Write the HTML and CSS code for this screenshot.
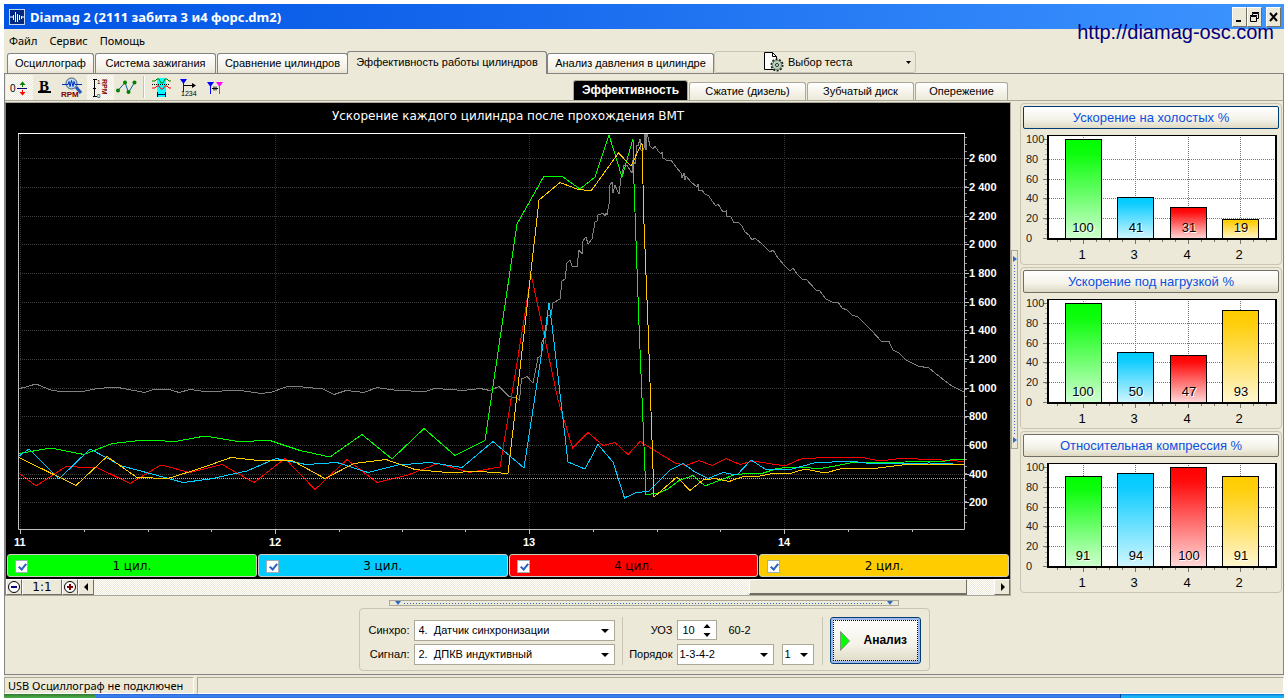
FILE: index.html
```html
<!DOCTYPE html>
<html lang="ru">
<head>
<meta charset="utf-8">
<title>Diamag 2</title>
<link rel="stylesheet" href="styles.css">
</head>
<body>
<div class="window">
  <header class="titlebar">
    <svg class="app-icon" viewBox="0 0 16 16" aria-hidden="true"><rect width="16" height="16" fill="#c8d8f0"/><rect x="1" y="1" width="14" height="14" fill="#002a80"/><path d="M1 8h3M4.500 6v5M6.500 3v10M8.500 5v8M10.500 6v5M12.500 7v3M12 8h3" fill="none" stroke="#fff"/></svg>
    <h1 class="title">Diamag 2 (2111 забита 3 и4 форс.dm2)</h1>
    <div class="win-buttons">
      <button class="win-btn" aria-label="Свернуть"><svg viewBox="0 0 11 16"><path d="M2 11h5v2H2z"/></svg></button>
      <button class="win-btn" aria-label="Восстановить"><svg viewBox="0 0 11 16"><path d="M3.500 7V4.500h6v5H8M3 3.500h7M1.500 7.500h6v5h-6zM1 6.500h7" fill="none" stroke="#000"/></svg></button>
      <button class="win-btn close" aria-label="Закрыть"><svg viewBox="0 0 11 16"><path d="M2 4l7 8M9 4l-7 8" fill="none" stroke="#000" stroke-width="2"/></svg></button>
    </div>
    <a class="site-link" href="#">http://diamag-osc.com</a>
  </header>

  <nav class="menu">
    <button class="menu-item">Файл</button>
    <button class="menu-item">Сервис</button>
    <button class="menu-item">Помощь</button>
  </nav>

  <div class="tabs">
    <button class="tab w-osc">Осциллограф</button>
    <button class="tab w-ign">Система зажигания</button>
    <button class="tab w-cmp">Сравнение цилиндров</button>
    <button class="tab active w-eff">Эффективность работы цилиндров</button>
    <button class="tab w-prs">Анализ давления в цилиндре</button>
    <button class="test-select">
      <svg class="doc-icon" viewBox="0 0 22 22" aria-hidden="true"><path d="M1.500 1.500h8l4 4v13h-12z" fill="#fff" stroke="#000"/><path d="M9.500 1.500v4h4" fill="none" stroke="#000"/><circle cx="14" cy="14" r="5.500" fill="#b9d3bd" stroke="#222" stroke-width="2" stroke-dasharray="2 1.400"/><circle cx="14" cy="14" r="4.500" fill="#b9d3bd" stroke="#6d8a72"/><circle cx="14" cy="14" r="1.500" fill="#fff" stroke="#222"/></svg>
      <span>Выбор теста</span>
      <svg class="caret" viewBox="0 0 5 3" aria-hidden="true"><path d="M0 0h5L2.500 3z"/></svg>
    </button>
  </div>

  <main class="page">
    <div class="toolbar">
      <button class="tool pressed" aria-label="Смещение нуля"><svg viewBox="6 75 27 25"><text x="10" y="92" font-size="10">0</text><path d="M17 88.500h10" stroke="#000080"/><path d="M22.500 87v-3" stroke="#008000"/><path d="M19.500 85l3-3.500 3 3.500z" fill="#008000"/><path d="M22.500 90v2" stroke="#f00"/><path d="M19.500 92l3 3.500 3-3.500z" fill="#f00"/></svg></button>
      <button class="tool" aria-label="Толщина линий"><svg viewBox="33 75 27 25"><text class="serif" x="39" y="91" font-size="15">B</text><path d="M38 92h13" stroke="#000" stroke-width="2"/></svg></button>
      <button class="tool" aria-label="Поиск оборотов"><svg viewBox="60 75 27 25"><path d="M76 87l5 6" stroke="#2454b8" stroke-width="3"/><circle cx="71.500" cy="83.500" r="5.500" fill="#b8dcf8" stroke="#456"/><path d="M62 84.500h6l1-3 1 5 1.500-6 1.500 6 1-5 1 3h7" fill="none" stroke="#0030c0"/><text x="61" y="97" font-size="8" class="rpm">RPM</text></svg></button>
      <button class="tool pressed" aria-label="Шкала оборотов"><svg viewBox="87 75 27 25"><path d="M93 79.500h4M93 96.500h4M94.500 79v18M93 88.500h3" stroke="#000"/><text x="97" y="84" font-size="6">1</text><text x="97" y="98" font-size="6">0</text><text transform="translate(102 79) rotate(90)" font-size="7" class="rpm">RPM</text></svg></button>
      <button class="tool" aria-label="Точки графика"><svg viewBox="114 75 27 25"><path d="M118 90.500l7-8 3.500 10 6-10" fill="none" stroke="#0060a0"/><g fill="#008000"><circle cx="118" cy="90.500" r="2"/><circle cx="125" cy="82.500" r="2"/><circle cx="128.500" cy="92" r="2"/><circle cx="134.500" cy="82.500" r="2"/></g></svg></button>
      <span class="tool-sep"></span>
      <button class="tool" aria-label="Окно сравнения"><svg viewBox="148 75 27 25"><path d="M157 78h9v19h-9z" fill="#0ff"/><path d="M152 81h3l2-2h2l2 4h2l2-4h2l2 2h2" fill="none" stroke="#008000"/><path d="M152 84.500h18" stroke="#000" stroke-dasharray="1 1"/><path d="M152 88h3l2-2h2l2 3h2l2-3h2l2 2h2" fill="none" stroke="#f00"/><path d="M157.500 92v5M165.500 92v5M157 94.500h9" stroke="#000080"/></svg></button>
      <button class="tool" aria-label="Метки цилиндров"><svg viewBox="175 75 27 25"><path d="M180 79h7l-3.500 5z" fill="#00f"/><path d="M183.500 80v12" stroke="#00f"/><path d="M184 85.500h10" stroke="#000"/><path d="M192 83l4 2.500-4 2.500z"/><text x="181" y="96" font-size="7">1234</text></svg></button>
      <button class="tool" aria-label="Интервал"><svg viewBox="202 75 27 25"><path d="M207 82h7l-3.500 5z" fill="#00f"/><path d="M210.500 82v12" stroke="#00f"/><path d="M216 82h7l-3.500 5z" fill="#f0f"/><path d="M219.500 82v12" stroke="#f0f"/><path d="M212 88.500h6M214 86.500v4M216 86.500v4" fill="none" stroke="#000"/></svg></button>
      <div class="subtabs">
        <button class="subtab active">Эффективность</button>
        <button class="subtab">Сжатие (дизель)</button>
        <button class="subtab narrow">Зубчатый диск</button>
        <button class="subtab small">Опережение</button>
      </div>
    </div>

    <div class="work">
      <section class="chart-panel">
        <svg class="chart" viewBox="6 103 1004 451" role="img" aria-label="Ускорение каждого цилиндра">
          <text class="chart-title" x="508" y="120">Ускорение каждого цилиндра после прохождения ВМТ</text>
          <path class="grid" d="M20 158.500H964M20 187.500H964M20 216.500H964M20 244.500H964M20 273.500H964M20 302.500H964M20 330.500H964M20 359.500H964M20 388.500H964M20 416.500H964M20 445.500H964M20 474.500H964M20 502.500H964"/>
          <path class="grid dim" d="M20.500 134V529M275.500 134V529M529.500 134V529M784.500 134V529"/>
          <g class="series">
            <polyline stroke="#808080" points="19,388.500 24,387.500 36,384 52,390.500 62,391.500 82,391.500 98,388.500 115,387 145,392.500 152,390 168,389 179,392.500 190,389.500 205,391.500 240,390.500 262,393.500 272,392 286,387 298,386.500 323,389 334,394.500 346,390.500 364,392.500 377,387.500 397,390.500 425,391.500 435,388.500 450,389.500 463,390.500 480,388.500 490,390.500 499,386.500 509,396.500 517,398 519.500,400.500 521.500,379 527,376.500 533,383 538,357.500 541,355.500 542,342 545,338 547,325 548,316 551,315 553,303 560,299 562,281 565,279 567,263 570,260 572,266 577,267 579,250 582,254 583,241 586,237 588,244 592,239 595,222 597,221 598,215 601,214 603,213 605,216 606,213 607,215 609,204 610,185 612,182 613,193 615,185 617,190 619,194 621,178 624,165 627,165 630,170 632,173 633,160 635,164 637,145 638,146 640,139 641,150 642,151 644,148 645,134 646,150 647,134 648,137 650,146 653,149 655,146 658,151 661,154 662,152 663,158 668,161 671,160 676,167 681,173 682,178 684,173 685,180 686,176 691,182 697,187 698,184 699,191 702,190 705,194 709,196 712,201 716,206 718,204 723,212 726,211 726,216 731,217 734,223 738,222 742,226 745,232 749,235 752,240 755,238 763,245 770,252 773,250 778,258 785,266 790,271 793,268 797,274 803,280 806,279 816,290 820,291 826,299 834,303 838,302 842,308 847,310 852,315 858,317 862,321 872,331 881,341 889,341.500 893,350 899,353 906,360 918,366 929,368 940,377 952,386 964,392"/>
            <polyline stroke="#ff0000" points="19,473 36,486 66,466.500 98,468 130,483.500 161,465 190,472.500 222,464.500 254,482.500 285,458.500 315,489.500 347,459.500 377,482.500 408,475 438,463.500 470,472.500 480,470.500 500,467 524,320 531,274 542,325 558,400 572.500,448 588,432.500 603,445.500 615,442.500 628,454.500 640,441.500 675,463 686,465.500 699,460.500 712,465.500 726,458.500 740,464.500 753,461 785,466 802,458.500 830,457.500 862,457.500 880,461 900,458.500 935,459.500 964,461.500"/>
            <polyline stroke="#00ff00" points="19,453.500 51,448 84,454.500 112,443.500 145,440 175,441.500 205,436 238,441.500 270,440.500 300,450.500 330,457 362,434.500 392,459 424,428.500 455,455.500 485,440.500 502,325 517,224 544,176 563,177 580,189 595,177 609,135 622,177 633,139 634,184 639,325 646,494.500 657,493.500 668,489 680,480 693,475.500 705,486 735,474.500 750,473.500 762,473.500 777,468.500 793,467 820,468.500 835,466 850,463 880,462.500 930,461.500 945,461 952,459.500 964,459.500"/>
            <polyline stroke="#00ccff" points="19,456 29,449 59,479 90,449 122,466 152,474 183,482.500 210,479 247,471 276,458.500 306,464.500 337,462.500 368,472.500 398,465 430,462.500 462,467.500 493,441.500 524,468 546,325 549,303 552,325 568,462 585,469 598,444.500 613,462 624.500,498 635,493 649,491 670,470 683,463.500 695,472 708,478.500 723,472.500 737,475 751,460 765,469 792,469 814,463 850,461 870,463.500 930,463 964,464.500"/>
            <polyline stroke="#ffcc00" points="19,457.500 76,485.500 107,456.500 137,477.500 168,478.500 200,468.500 231,457.500 258,460.500 293,461 325,478.500 354,463.500 386,459.500 415,469.500 447,472.500 480,471.500 508,473.500 525,325 539,200 560,182.500 577,189 591,191 618.500,153 631,166 642,143 644,224 648,325 654,497 677,477 690,490.500 703,480 715,478.500 729,481.500 745,476 760,476 775,473 790,473.500 805,469 825,473 842,468.500 870,469 906,464.500 964,464.500"/>
          </g>
          <path class="threshold" d="M19 478.500H964"/>
          <path d="M18 133.500H965" stroke="#fff"/>
          <path d="M18.500 134V529.500H964.500V134" fill="none" stroke="#c0c0c0"/>
          <path class="tick" d="M965 158.500h4M965 187.500h4M965 216.500h4M965 244.500h4M965 273.500h4M965 302.500h4M965 330.500h4M965 359.500h4M965 388.500h4M965 416.500h4M965 445.500h4M965 474.500h4M965 502.500h4M20.500 530v4M275.500 530v4M529.500 530v4M784.500 530v4M84.500 530v2M148.500 530v2M211.500 530v2M339.500 530v2M402.500 530v2M465.500 530v2M593.500 530v2M657.500 530v2M720.500 530v2M848.500 530v2M912.500 530v2"/>
          <path class="minor" d="M966 136.900V529"/>
          <g class="axis-text">
            <text x="969" y="162">2 600</text><text x="969" y="191">2 400</text><text x="969" y="220">2 200</text><text x="969" y="248">2 000</text><text x="969" y="277">1 800</text><text x="969" y="306">1 600</text><text x="969" y="334">1 400</text><text x="969" y="363">1 200</text><text x="969" y="392">1 000</text><text x="969" y="420">800</text><text x="969" y="449">600</text><text x="969" y="478">400</text><text x="969" y="506">200</text>
            <text x="14" y="546">11</text><text x="269" y="546">12</text><text x="523" y="546">13</text><text x="778" y="546">14</text>
          </g>
        </svg>
        <div class="legend">
          <label class="cyl green"><input type="checkbox" checked><span>1 цил.</span></label>
          <label class="cyl cyan"><input type="checkbox" checked><span>3 цил.</span></label>
          <label class="cyl red"><input type="checkbox" checked><span>4 цил.</span></label>
          <label class="cyl yellow"><input type="checkbox" checked><span>2 цил.</span></label>
        </div>
        <div class="scroll-row">
          <button class="bevel" aria-label="Уменьшить"><svg viewBox="0 0 14 14"><circle cx="7" cy="7" r="5.500" fill="#fff" stroke="#000"/><path d="M4 7h6" stroke="#000080" stroke-width="2"/></svg></button>
          <button class="bevel ratio">1:1</button>
          <button class="bevel" aria-label="Увеличить"><svg viewBox="0 0 14 14"><circle cx="7" cy="7" r="5.500" fill="#fff" stroke="#000"/><path d="M4 7h6M7 4v6" stroke="#800000" stroke-width="2"/></svg></button>
          <button class="bevel" aria-label="Влево"><svg viewBox="0 0 14 14"><path d="M9 3v8L5 7z"/></svg></button>
          <div class="track"><div class="thumb"></div></div>
          <button class="bevel" aria-label="Вправо"><svg viewBox="0 0 14 14"><path d="M6 3v8l4-4z"/></svg></button>
        </div>
      </section>

      <div class="splitter-v"><span class="arrow-r"></span><span class="dots-v"></span><span class="arrow-r"></span></div>

      <aside class="side">
        <svg class="defs" aria-hidden="true">
          <defs>
            <linearGradient id="g1" x2="0" y2="1"><stop offset="0" stop-color="#00ff00"/><stop offset=".15" stop-color="#0dfd0d"/><stop offset="1" stop-color="#d0ffd0"/></linearGradient>
            <linearGradient id="g3" x2="0" y2="1"><stop offset="0" stop-color="#00ccff"/><stop offset=".15" stop-color="#0dccff"/><stop offset="1" stop-color="#d0f6ff"/></linearGradient>
            <linearGradient id="g4" x2="0" y2="1"><stop offset="0" stop-color="#ff0000"/><stop offset=".15" stop-color="#ff0d0d"/><stop offset="1" stop-color="#ffd8d8"/></linearGradient>
            <linearGradient id="g2" x2="0" y2="1"><stop offset="0" stop-color="#ffcc00"/><stop offset=".15" stop-color="#ffcf0d"/><stop offset="1" stop-color="#fff6d0"/></linearGradient>
            <g id="axes">
              <rect x="26" y="5" width="229" height="103" fill="#fff"/>
              <path d="M27 28.500H254M27 48.500H254M27 67.500H254M27 87.500H254M61.500 6V107M113.500 6V107M166.500 6V107M218.500 6V107" stroke="#777" stroke-dasharray="1 1"/>
              <path d="M25 4.500H255" stroke="#000"/><path d="M26 4V109M254 4V109" stroke="#000" stroke-width="2"/><path d="M25 108H255" stroke="#000" stroke-width="2"/>
              <path d="M21 8.500h4M21 28.500h4M21 48.500h4M21 67.500h4M21 87.500h4M21 107.500h4M61.500 109v4M113.500 109v4M166.500 109v4M218.500 109v4M35.500 109v2M48.500 109v2M74.500 109v2M87.500 109v2M100.500 109v2M127.500 109v2M140.500 109v2M153.500 109v2M179.500 109v2M192.500 109v2M205.500 109v2M231.500 109v2M244.500 109v2" stroke="#777"/>
              <path d="M24 8V108" stroke="#777" stroke-width="1" stroke-dasharray="1 4"/>
              <g class="scale"><text x="4" y="12">100</text><text x="4" y="32">80</text><text x="4" y="52">60</text><text x="4" y="71">40</text><text x="4" y="91">20</text><text x="4" y="111">0</text></g>
              <g class="bar-text"><text x="60" y="128">1</text><text x="112" y="128">3</text><text x="165" y="128">4</text><text x="217" y="128">2</text></g>
            </g>
          </defs>
        </svg>
        <section class="gauge">
          <button class="gauge-title focus">Ускорение на холостых %</button>
          <svg class="gauge-plot" viewBox="0 0 258 132" role="img" aria-label="Ускорение на холостых">
            <use href="#axes"/>
            <g stroke="#000"><rect x="43.500" y="8.500" width="36" height="99" fill="url(#g1)"/><rect x="95.500" y="66.500" width="36" height="41" fill="url(#g3)"/><rect x="148.500" y="76.500" width="36" height="31" fill="url(#g4)"/><rect x="200.500" y="88.500" width="36" height="19" fill="url(#g2)"/></g>
            <g class="bar-text value"><text x="61" y="101">100</text><text x="114" y="101">41</text><text x="167" y="101">31</text><text x="219" y="101">19</text></g>
          </svg>
        </section>
        <section class="gauge">
          <button class="gauge-title">Ускорение под нагрузкой %</button>
          <svg class="gauge-plot" viewBox="0 0 258 132" role="img" aria-label="Ускорение под нагрузкой">
            <use href="#axes"/>
            <g stroke="#000"><rect x="43.500" y="8.500" width="36" height="99" fill="url(#g1)"/><rect x="95.500" y="57.500" width="36" height="50" fill="url(#g3)"/><rect x="148.500" y="60.500" width="36" height="47" fill="url(#g4)"/><rect x="200.500" y="15.500" width="36" height="92" fill="url(#g2)"/></g>
            <g class="bar-text value"><text x="61" y="101">100</text><text x="114" y="101">50</text><text x="167" y="101">47</text><text x="219" y="101">93</text></g>
          </svg>
        </section>
        <section class="gauge">
          <button class="gauge-title">Относительная компрессия %</button>
          <svg class="gauge-plot" viewBox="0 0 258 132" role="img" aria-label="Относительная компрессия">
            <use href="#axes"/>
            <g stroke="#000"><rect x="43.500" y="17.500" width="36" height="90" fill="url(#g1)"/><rect x="95.500" y="14.500" width="36" height="93" fill="url(#g3)"/><rect x="148.500" y="8.500" width="36" height="99" fill="url(#g4)"/><rect x="200.500" y="17.500" width="36" height="90" fill="url(#g2)"/></g>
            <g class="bar-text value"><text x="61" y="101">91</text><text x="114" y="101">94</text><text x="167" y="101">100</text><text x="219" y="101">91</text></g>
          </svg>
        </section>
      </aside>
    </div>

    <div class="bottom">
      <div class="splitter-h"><span class="arrow-d"></span><span class="dots-h"></span><span class="arrow-d"></span></div>
      <form class="controls">
        <div class="fields signal">
          <label for="sync">Синхро:</label>
          <span class="combo"><select id="sync"><option>4.&nbsp; Датчик синхронизации</option></select></span>
          <label for="signal">Сигнал:</label>
          <span class="combo"><select id="signal"><option>2.&nbsp; ДПКВ индуктивный</option></select></span>
        </div>
        <div class="fields order">
          <label for="angle">УОЗ</label>
          <div class="pair">
            <span class="spin"><input id="angle" type="text" value="10"><svg viewBox="0 0 7 13" aria-hidden="true"><path d="M0 4h7L3.500 0zM0 9h7l-3.500 4z"/></svg></span>
            <span class="teeth">60-2</span>
          </div>
          <label for="order">Порядок</label>
          <div class="pair">
            <span class="combo order-combo"><select id="order"><option>1-3-4-2</option></select></span>
            <span class="combo first-combo"><select aria-label="Первый цилиндр"><option>1</option></select></span>
          </div>
        </div>
        <div class="run"><button type="button" class="analyze"><svg viewBox="0 0 10 20" aria-hidden="true"><path d="M.5.500v19L9.500 10z" fill="#00ff00" stroke="#7a9a7a"/></svg>Анализ</button></div>
      </form>
    </div>
  </main>

  <footer class="status">
    <span class="cell first">USB Осциллограф не подключен</span>
    <span class="cell rest"></span>
  </footer>
  <div class="taskbar"><span class="start"></span><span class="tray"></span></div>
</div>
</body>
</html>
```
FILE: styles.css
```css
* { box-sizing: border-box; }
body {
  margin: 0;
  padding: 4px 4px 0;
  background: #fff;
  color: #000;
  font: 11px/13px "Noto Sans", "Liberation Sans", sans-serif;
}
button, input, select { font: inherit; color: inherit; margin: 0; padding: 0; border: 0; background: none; border-radius: 0; }
button { white-space: nowrap; }
svg { display: block; }
.window { display: flex; flex-direction: column; min-height: calc(100vh - 4px); background: #ece9d8; }

.titlebar {
  position: relative;
  display: flex;
  align-items: center;
  height: 25px;
  padding: 0 3px 0 5px;
  background: linear-gradient(90deg, #0054e3, #1466ec 35%, #3d95ff);
}
.app-icon { width: 16px; height: 16px; }
.title { flex: 1; margin: 0 0 0 5px; color: #fff; font: bold 13px/16px "Noto Sans", sans-serif; }
.win-buttons { display: flex; }
.win-btn {
  width: 15px;
  height: 20px;
  padding: 1px;
  background: #ece9d8;
  border: 1px solid;
  border-color: #fff #716f64 #716f64 #fff;
}
.win-btn svg { width: 11px; height: 16px; }
.close { margin-left: 4px; }
.site-link { position: absolute; top: 16px; right: 10px; color: #00007f; font: 20px/24px "Liberation Sans", sans-serif; text-decoration: none; }

.menu { display: flex; gap: 12px; height: 22px; padding: 0 5px; }

.tabs { display: flex; align-items: flex-end; height: 23px; padding-left: 3px; border-bottom: 1px solid #848284; font-family: "Liberation Sans", sans-serif; }
.tab {
  height: 20px;
  margin-right: 1px;
  background: linear-gradient(#fff, #f2efe4 80%, #e6e2d0);
  border: 1px solid #848284;
  border-bottom: 0;
  border-radius: 3px 3px 0 0;
}
.tab.active { height: 23px; margin: 0 0 -1px -2px; padding-bottom: 2px; background: #ece9d8; }
.w-osc { width: 87px; }
.w-ign { width: 121px; }
.w-cmp { width: 131px; }
.w-eff { width: 200px; }
.w-prs { width: 167px; margin-right: 0; }
.test-select { display: flex; align-items: center; width: 202px; height: 22px; padding: 0 4px 0 48px; border: 1px solid #c8c5b4; border-radius: 3px; }
.doc-icon { width: 22px; height: 22px; margin-right: 3px; }
.caret { width: 5px; height: 3px; margin-left: auto; }

.page { flex: 1; display: flex; flex-direction: column; border: solid #848284; border-width: 0 1px 1px; }
.toolbar { display: flex; height: 27px; padding-left: 1px; border-bottom: 1px solid #aca899; }
.tool { width: 27px; height: 25px; margin-top: 1px; }
.tool svg { width: 27px; height: 25px; font-family: "Liberation Sans", sans-serif; }
.tool .serif { font-family: "Liberation Serif", serif; font-weight: bold; }
.tool .rpm { fill: #800000; font-weight: bold; }
.pressed, .track { background: conic-gradient(#fff 25%, #ece9d8 0 50%, #fff 0 75%, #ece9d8 0) 0 0 / 2px 2px; }
.tool-sep { width: 1px; margin: 2px 3px; background: #fff; box-shadow: -1px 0 #c5c2b2; }
.subtabs { display: flex; align-items: flex-end; gap: 1px; margin: 0 auto 0 344px; font-family: "Liberation Sans", sans-serif; }
.subtab {
  width: 117px;
  height: 18px;
  background: linear-gradient(#fff, #ece9d8);
  border: 1px solid #aca899;
  border-bottom: 0;
  border-radius: 3px 3px 0 0;
}
.subtab.active { width: 115px; height: 20px; background: #000; color: #fff; font-weight: bold; font-size: 12px; }
.narrow { width: 107px; }
.small { width: 93px; }

.work { display: flex; align-items: flex-start; margin-top: 1px; }
.chart-panel { flex: 1; border: 1px solid #aca899; border-left-color: #848284; background: #000; }
.chart { width: 100%; height: auto; background: #000; }
.chart-title { fill: #fff; text-anchor: middle; font: 12px "DejaVu Sans", sans-serif; }
.grid { stroke: #404040; stroke-dasharray: 1 1; fill: none; }
.dim { stroke: #303030; }
.series { fill: none; stroke-width: 1px; shape-rendering: crispEdges; }
.threshold { stroke: #00ffff; stroke-dasharray: 1 1; }
.tick { stroke: #c0c0c0; }
.minor { stroke: #909090; stroke-width: 2px; stroke-dasharray: 1 6; }
.axis-text { fill: #fff; font: bold 11px "Liberation Sans", sans-serif; }

.legend { display: flex; gap: 1px; height: 25px; padding: 0 1px 2px; }
.cyl {
  flex: 1;
  position: relative;
  display: flex;
  align-items: center;
  justify-content: center;
  padding-top: 1px;
  border: 1px solid #d0cdc0;
  border-radius: 3px;
  font: 12px/16px "DejaVu Sans", sans-serif;
}
.cyl input {
  position: absolute;
  left: 7px;
  top: 5px;
  width: 13px;
  height: 13px;
  appearance: none;
  background: #fff;
  border: 1px solid #9ab0b8;
}
.cyl input:checked::after {
  content: "";
  position: absolute;
  left: 4px;
  top: 1px;
  width: 3px;
  height: 6px;
  border: solid #2861bf;
  border-width: 0 2px 2px 0;
  transform: rotate(40deg);
}
.green { background: #00ff00; }
.cyan { background: #00ccff; }
.red { background: #ff0000; }
.yellow { background: #ffcc00; }

.scroll-row { display: flex; height: 16px; background: #ece9d8; }
.bevel { width: 16px; height: 16px; border: 1px solid; border-color: #fff #716f64 #716f64 #fff; background: #ece9d8; }
.bevel svg { width: 14px; height: 14px; }
.ratio { width: 40px; font: 12px/14px "DejaVu Sans", sans-serif; }
.track { flex: 1; display: flex; justify-content: flex-end; padding-right: 27px; }
.thumb { width: 25%; height: 16px; background: #ece9d8; border: 1px solid; border-color: #fff #716f64 #716f64 #fff; border-bottom-width: 2px; }

.splitter-v { display: flex; flex-direction: column; align-items: center; width: 7px; height: 199px; margin-top: 148px; padding: 5px 0; border: 1px solid #aca899; }
.arrow-r { border: 3px solid transparent; border-left: 4px solid #316ac5; border-right: 0; }
.arrow-d { border: 3px solid transparent; border-top: 4px solid #316ac5; border-bottom: 0; }
.dots-v { flex: 1; width: 1px; margin: 3px 0; background: repeating-linear-gradient(#316ac5 0 1px, transparent 1px 3px); }
.dots-h { flex: 1; height: 1px; margin: 0 3px; background: repeating-linear-gradient(90deg, #316ac5 0 1px, transparent 1px 3px); }

.side { display: flex; flex-direction: column; gap: 2px; width: 262px; margin: 1px 1px 0 2px; }
.defs { position: absolute; width: 0; height: 0; }
.gauge { height: 162px; padding: 2px 1px; border: 1px solid #c8c5b4; border-radius: 4px; }
.gauge-title {
  display: block;
  width: calc(100% - 2px);
  height: 23px;
  margin: 0 1px 2px;
  border: 1px solid #716f64;
  border-radius: 2px;
  background: linear-gradient(#fff, #f4f2e8 60%, #ddd9c3);
  color: #0c50e0;
  font: 13px/16px "Liberation Sans", sans-serif;
}
.gauge-title.focus { border-color: #003c74; }
.gauge-plot { width: 258px; height: 132px; }
.scale { font: 11px "Liberation Sans", sans-serif; fill: #222; }
.bar-text { font: 13px "Liberation Sans", sans-serif; text-anchor: middle; }
.value { text-shadow: 1px 1px #fff; }

.bottom { display: flex; flex-direction: column; align-items: center; gap: 2px; margin-top: 4px; }
.splitter-h { display: flex; align-items: center; width: 510px; height: 6px; padding: 0 5px; border: 1px solid #aca899; }
.controls { display: flex; padding: 8px 8px 5px; border: 1px solid #c8c5b4; border-radius: 4px; font: 11px/13px "Liberation Sans", sans-serif; }
.fields { display: grid; align-items: center; gap: 3px 4px; }
.fields label { text-align: right; }
.signal { grid-template-columns: 42px 201px; padding: 3px 7px 0 0; border-right: 1px solid #c8c5b4; }
.order { grid-template-columns: 46px 137px; padding: 3px 8px 0 4px; border-right: 1px solid #c8c5b4; }
.pair { display: flex; align-items: center; gap: 8px; }
.combo { position: relative; display: block; }
.combo::after { content: ""; position: absolute; right: 6px; top: 9px; border: 4px solid transparent; border-top-color: #000; border-bottom: 0; }
.combo select { width: 100%; height: 21px; padding: 0 4px; appearance: none; background: #fff; border: 1px solid #aca899; display: block; }
.order-combo { width: 97px; }
.first-combo { width: 32px; }
.order-combo select, .first-combo select { padding-left: 2px; }
.spin { display: flex; align-items: center; width: 40px; height: 20px; padding: 0 5px; background: #fff; border: 1px solid #aca899; }
.spin input { width: 20px; background: #fff; }
.spin svg { width: 8px; height: 13px; }
.teeth { margin-left: 4px; }
.run { padding-left: 7px; }
.analyze {
  display: flex;
  align-items: center;
  gap: 14px;
  width: 91px;
  height: 47px;
  padding-left: 9px;
  background: linear-gradient(#fff, #f4f2e8 60%, #ddd9c3);
  border: 1px solid #003c74;
  border-radius: 3px;
  outline: 1px dotted #000;
  outline-offset: -4px;
  box-shadow: inset 0 0 0 2px #9db9eb;
  font-weight: bold;
  font-size: 12px;
}
.analyze svg { width: 10px; height: 20px; }

.status { display: flex; gap: 3px; height: 17px; margin-top: 2px; }
.cell { height: 17px; padding: 1px 3px; border: 1px solid; border-color: #aca899 #fff #fff #aca899; }
.first { width: 190px; }
.rest { flex: 1; }
.taskbar { display: flex; justify-content: space-between; height: 4px; background: linear-gradient(#2a62d4, #3f86ee 50%, #2a66dc); }
.start { width: 92px; border-radius: 0 4px 0 0; background: linear-gradient(#2f7a2f, #4fae4c); }
.tray { width: 164px; border-left: 1px solid #0a3c8c; background: linear-gradient(#0e68d0, #18b4f4 50%); }
```
